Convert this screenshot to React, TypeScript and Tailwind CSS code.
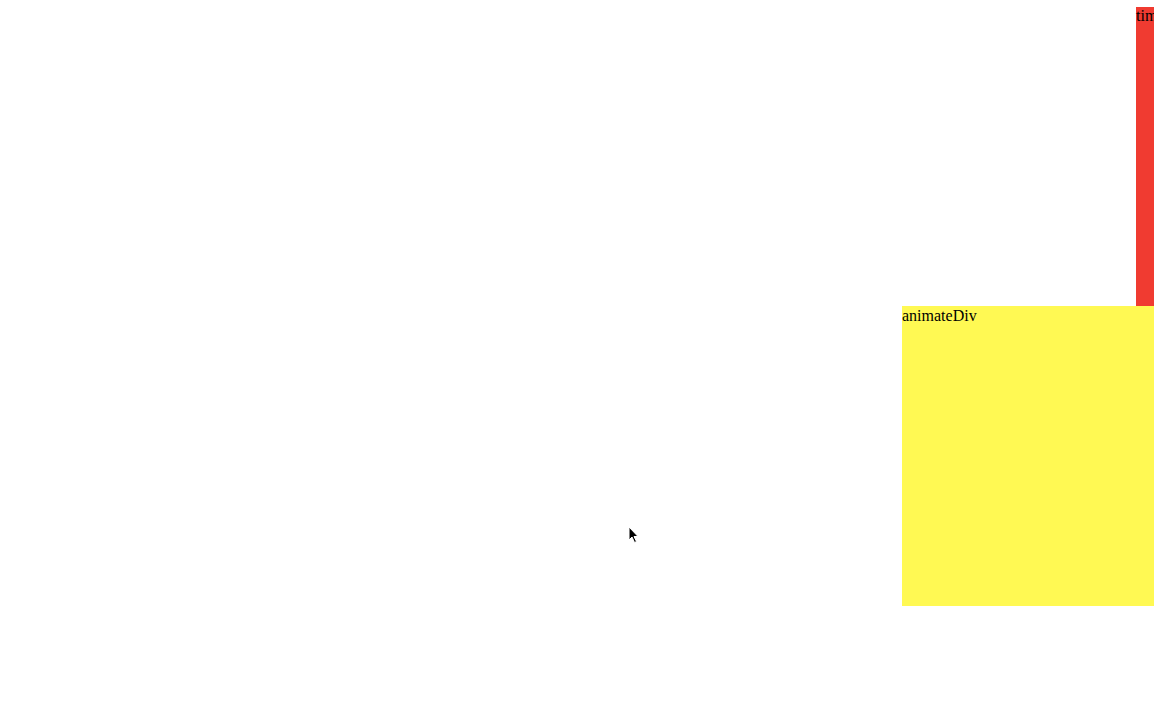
import React from 'react';

export default function App() {
  return (
    <div className="relative w-[1154px] h-[707px] overflow-hidden bg-white font-['Liberation_Serif',serif] text-base text-black">
      <div className="absolute left-[1136px] top-[7px] w-[300px] h-[300px] bg-[#f03b31] leading-[18px]">
        timerDiv
      </div>
      {/* animated block */}
      <div className="absolute left-[902px] top-[306px] w-[300px] h-[300px] bg-[#fff953] leading-[20px]">
        animateDiv
      </div>
      {/* mouse pointer */}
      <svg
        className="absolute left-[628px] top-[526px]"
        width="12"
        height="18"
        viewBox="0 0 12 18"
      >
        <path d="M1 1 L1 14 L4 11 L6.5 16.5 L8.5 15.5 L6 10.5 L10 10.5 Z" fill="#000" stroke="#fff" strokeWidth="1" />
      </svg>
    </div>
  );
}
